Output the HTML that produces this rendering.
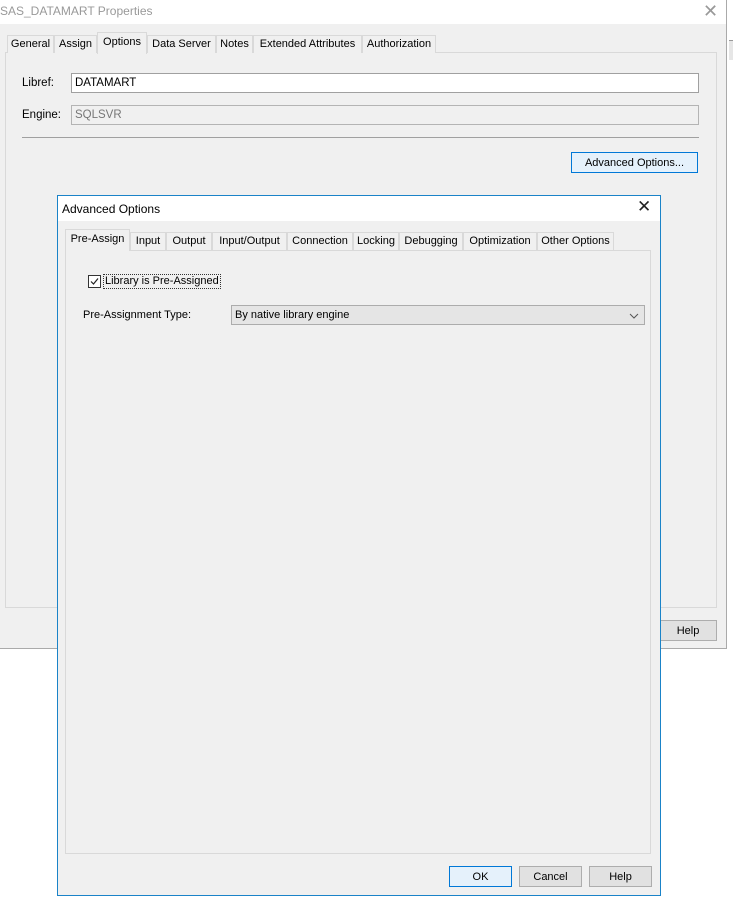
<!DOCTYPE html>
<html><head><style>
*{box-sizing:border-box;margin:0;padding:0}
body{width:733px;height:899px;background:#fff;position:relative;overflow:hidden;font-family:"Liberation Sans",sans-serif;font-size:11.5px;color:#000}
.a{position:absolute}
.tab{position:absolute;height:18px;border:1px solid #d9d9d9;border-bottom:none;background:#f0f0f0;text-align:center;line-height:17px;white-space:nowrap;font-size:11px}
.tab.sel{background:#fbfbfb;height:22px;line-height:19px;z-index:2}
.btn{position:absolute;height:21px;border:1px solid #adadad;background:#e1e1e1;text-align:center;line-height:20px;font-size:11px}
.btn.def{border-color:#0078d7;background:#e5f1fb}
</style></head><body>
<div class="a" style="left:0;top:0;width:727px;height:649px;background:#f0f0f0;border-right:1px solid #aaa;border-bottom:1px solid #aaa"></div>
<div class="a" style="left:0;top:0;width:726px;height:24px;background:#fff"></div>
<div class="a" style="left:0;top:4px;color:#999;font-size:12px">SAS_DATAMART Properties</div>
<div class="a" style="left:703px;top:1px;color:#999;font-size:18px">✕</div>
<div class="a" style="left:729px;top:40px;width:4px;height:20px;background:#e6e6e6;border-top:1px solid #999"></div>

<div class="a" style="left:5px;top:52px;width:712px;height:556px;border:1px solid #d9d9d9;background:#f0f0f0"></div>
<div class="tab" style="left:7px;top:35px;width:47px">General</div>
<div class="tab" style="left:54px;top:35px;width:43px">Assign</div>
<div class="tab sel" style="left:97px;top:32px;width:50px;background:#f0f0f0">Options</div>
<div class="tab" style="left:147px;top:35px;width:69px">Data Server</div>
<div class="tab" style="left:216px;top:35px;width:37px">Notes</div>
<div class="tab" style="left:253px;top:35px;width:109px">Extended Attributes</div>
<div class="tab" style="left:362px;top:35px;width:74px">Authorization</div>

<div class="a" style="left:22px;top:77px">Libref:</div>
<div class="a" style="left:71px;top:73px;width:628px;height:20px;background:#fff;border:1px solid #a0a0a0;padding-left:3px;line-height:19px">DATAMART</div>
<div class="a" style="left:22px;top:109px">Engine:</div>
<div class="a" style="left:71px;top:105px;width:628px;height:20px;background:#f0f0f0;border:1px solid #b4b4b4;padding-left:3px;line-height:19px;color:#777">SQLSVR</div>
<div class="a" style="left:22px;top:137px;width:677px;height:1px;background:#a0a0a0"></div>
<div class="btn def" style="left:571px;top:152px;width:127px">Advanced Options...</div>
<div class="btn" style="left:659px;top:620px;width:58px">Help</div>

<div class="a" style="left:57px;top:195px;width:604px;height:701px;background:#f0f0f0;border:1px solid #1a83c8"></div>
<div class="a" style="left:58px;top:196px;width:602px;height:25px;background:#fff"></div>
<div class="a" style="left:62px;top:202px;font-size:12px">Advanced Options</div>
<div class="a" style="left:637px;top:197px;font-size:17px;color:#222">✕</div>

<div class="a" style="left:65px;top:250px;width:586px;height:604px;border:1px solid #d9d9d9;background:#f0f0f0"></div>
<div class="tab sel" style="left:65px;top:229px;width:65px;background:#f0f0f0">Pre-Assign</div>
<div class="tab" style="left:130px;top:232px;width:36px">Input</div>
<div class="tab" style="left:166px;top:232px;width:46px">Output</div>
<div class="tab" style="left:212px;top:232px;width:75px">Input/Output</div>
<div class="tab" style="left:287px;top:232px;width:66px">Connection</div>
<div class="tab" style="left:353px;top:232px;width:46px">Locking</div>
<div class="tab" style="left:399px;top:232px;width:64px">Debugging</div>
<div class="tab" style="left:463px;top:232px;width:74px">Optimization</div>
<div class="tab" style="left:537px;top:232px;width:77px">Other Options</div>

<div class="a" style="left:88px;top:275px;width:13px;height:13px;border:1px solid #333;background:#fff"></div>
<svg class="a" style="left:88px;top:275px" width="13" height="13"><path d="M3 6.5 L5.5 9 L10 3.5" stroke="#222" stroke-width="1.2" fill="none"/></svg>
<div class="a" style="left:103px;top:274px;border:1px dotted #333;padding:0 1px;line-height:13px;font-size:11px">Library is Pre-Assigned</div>
<div class="a" style="left:83px;top:309px;font-size:11px">Pre-Assignment Type:</div>
<div class="a" style="left:231px;top:305px;width:414px;height:20px;background:#e5e5e5;border:1px solid #acacac;padding-left:3px;line-height:19px;font-size:11px">By native library engine</div>
<svg class="a" style="left:629px;top:313px" width="10" height="6"><path d="M1 1 L5 5 L9 1" stroke="#555" fill="none"/></svg>

<div class="btn def" style="left:449px;top:866px;width:63px">OK</div>
<div class="btn" style="left:519px;top:866px;width:63px">Cancel</div>
<div class="btn" style="left:589px;top:866px;width:63px">Help</div>
</body></html>
